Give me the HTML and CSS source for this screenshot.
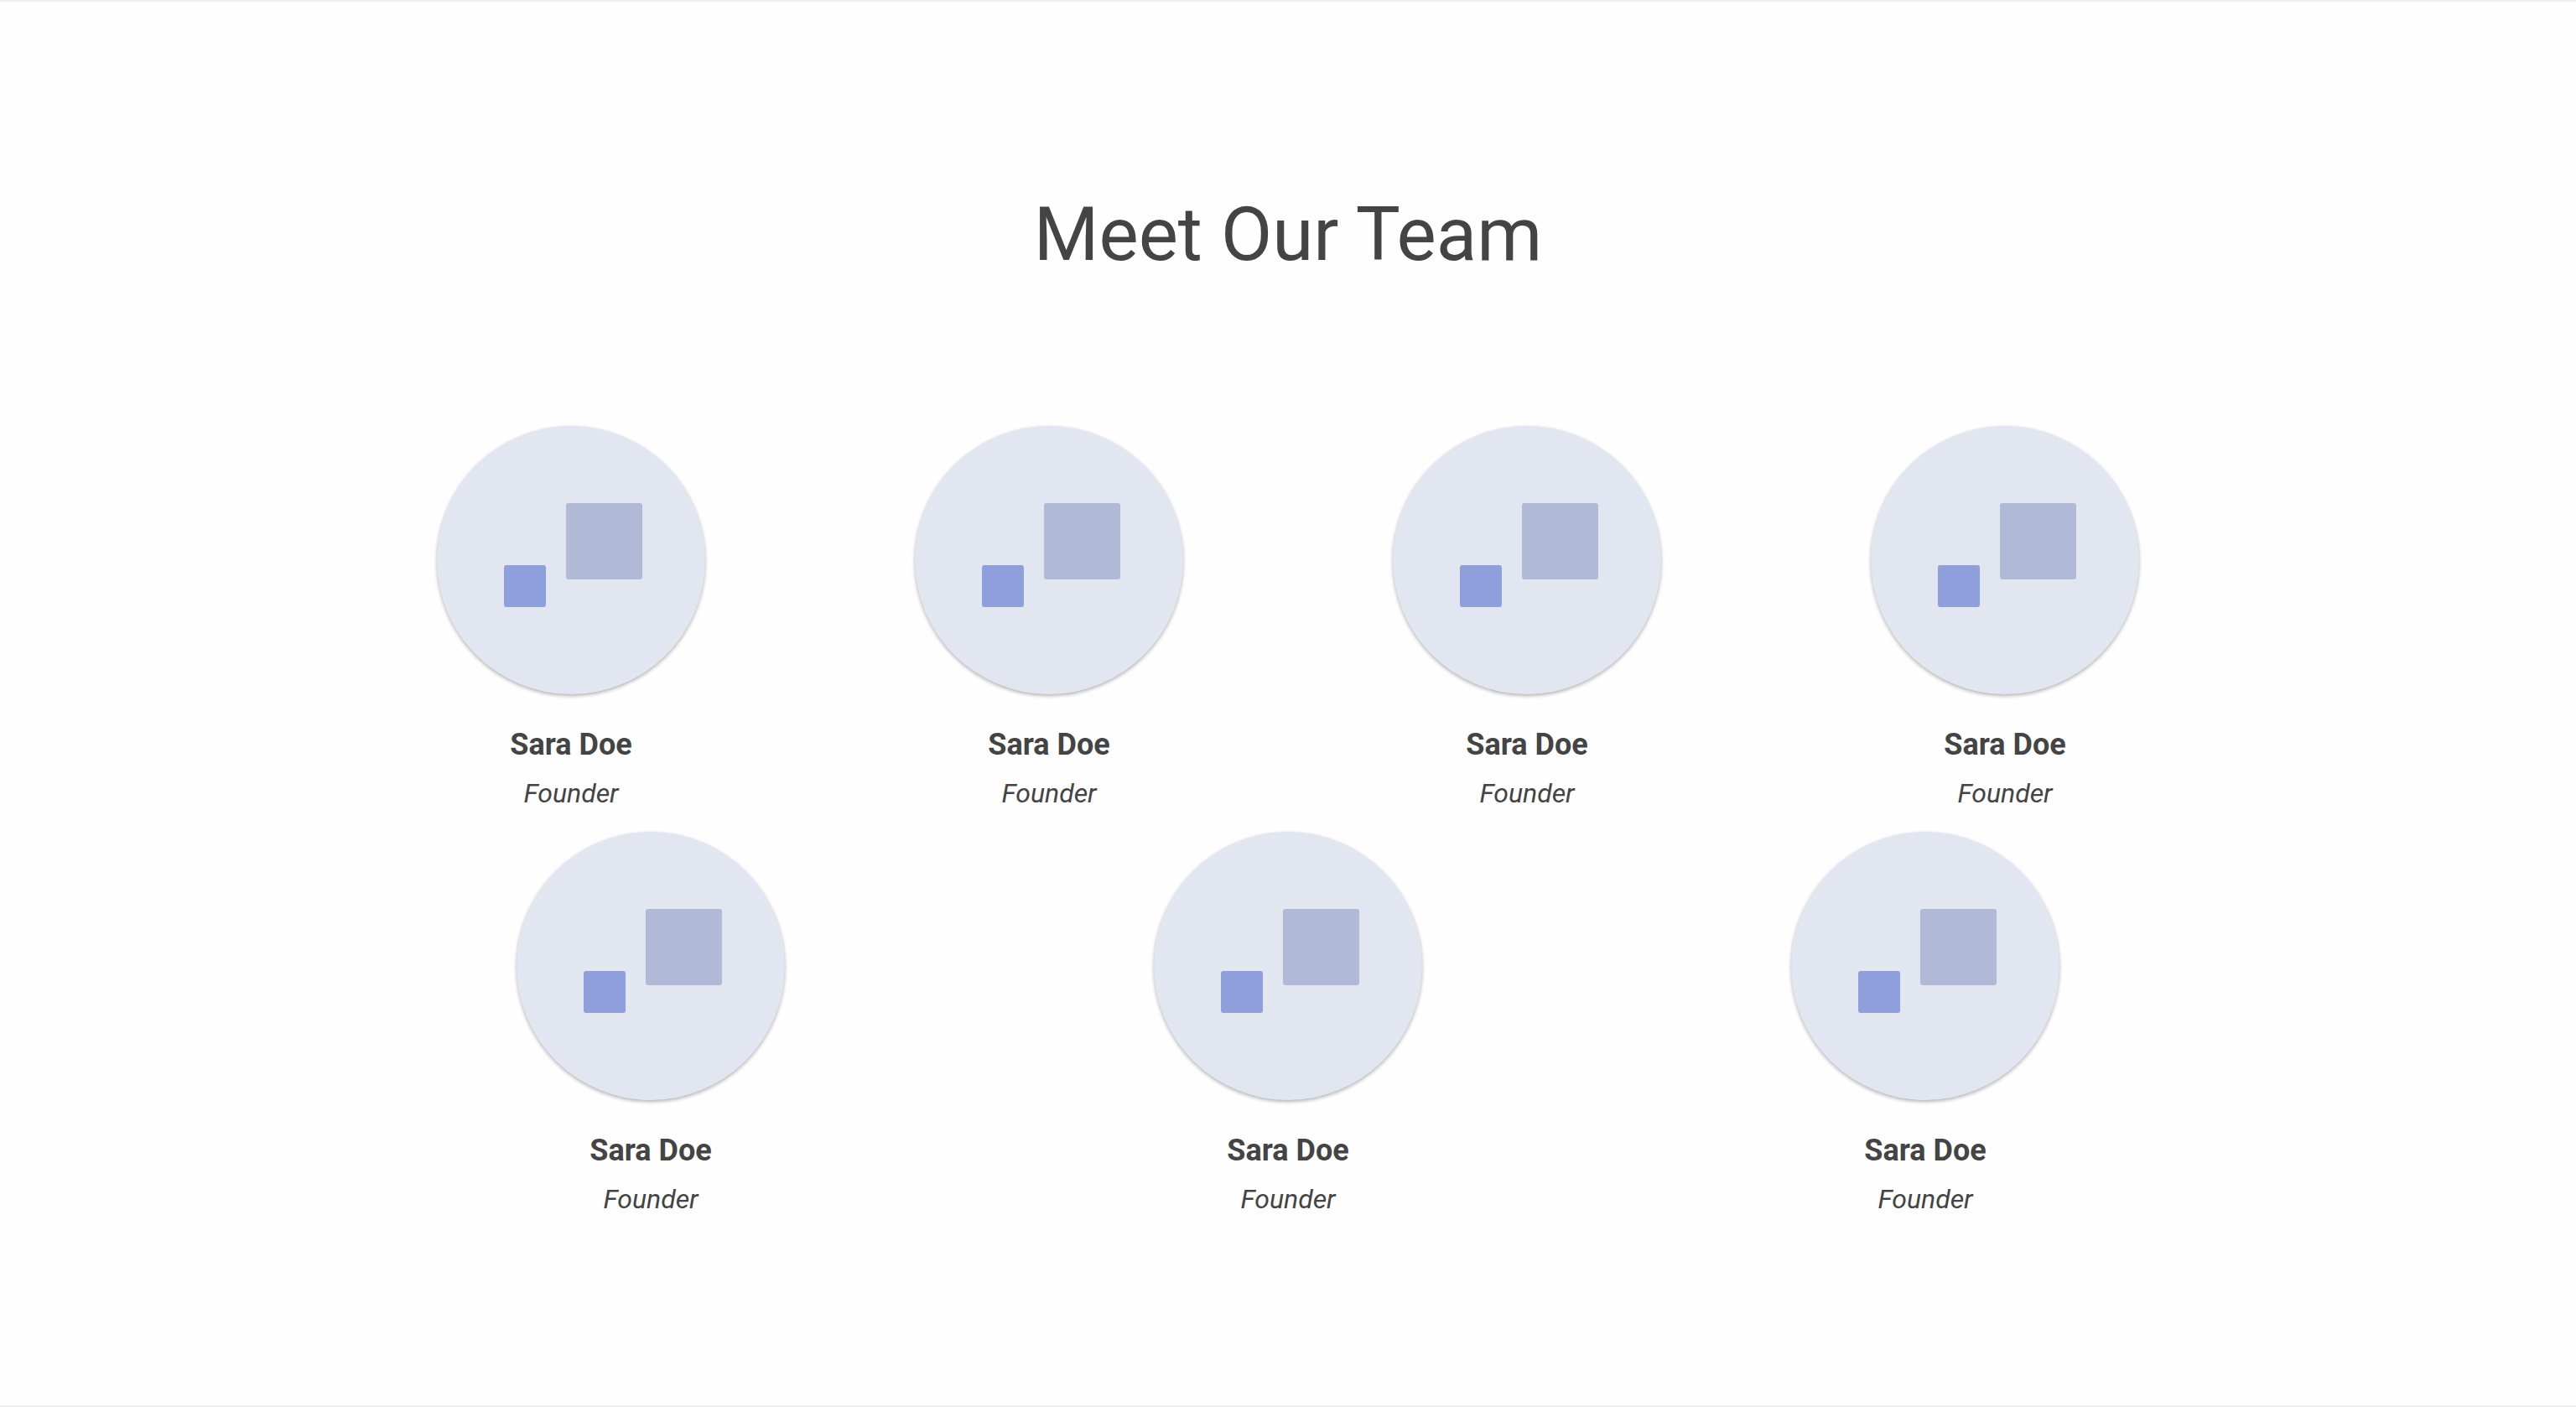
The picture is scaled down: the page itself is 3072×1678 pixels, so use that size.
FILE: index.html
```
<!DOCTYPE html>
<html lang="en">
<head>
<meta charset="utf-8">
<title>Meet Our Team</title>
<link rel="stylesheet" href="styles.css">
</head>
<body>
<svg width="0" height="0" class="defs" aria-hidden="true">
<symbol id="avatar" viewBox="0 0 320 320">
<rect x="154" y="92" width="91" height="91" rx="3" fill="#b0b9d6"/>
<rect x="80" y="166" width="50" height="50" rx="3" fill="#8f9fdb"/>
</symbol>
</svg>
<main class="team">
<h1 class="title">Meet Our Team</h1>
<ul class="members">
<li class="member"><svg class="avatar" aria-hidden="true"><use href="#avatar"/></svg><h2 class="name">Sara Doe</h2><p class="role">Founder</p></li>
<li class="member"><svg class="avatar" aria-hidden="true"><use href="#avatar"/></svg><h2 class="name">Sara Doe</h2><p class="role">Founder</p></li>
<li class="member"><svg class="avatar" aria-hidden="true"><use href="#avatar"/></svg><h2 class="name">Sara Doe</h2><p class="role">Founder</p></li>
<li class="member"><svg class="avatar" aria-hidden="true"><use href="#avatar"/></svg><h2 class="name">Sara Doe</h2><p class="role">Founder</p></li>
</ul>
<ul class="members">
<li class="member"><svg class="avatar" aria-hidden="true"><use href="#avatar"/></svg><h2 class="name">Sara Doe</h2><p class="role">Founder</p></li>
<li class="member"><svg class="avatar" aria-hidden="true"><use href="#avatar"/></svg><h2 class="name">Sara Doe</h2><p class="role">Founder</p></li>
<li class="member"><svg class="avatar" aria-hidden="true"><use href="#avatar"/></svg><h2 class="name">Sara Doe</h2><p class="role">Founder</p></li>
</ul>
</main>
</body>
</html>
```
FILE: styles.css
```
* {
  box-sizing: border-box;
  margin: 0;
  padding: 0;
}

body {
  background: #fefefe;
  color: #444;
  font-family: Roboto, sans-serif;
}

.defs {
  display: block;
}

.team {
  padding: 224px 32px 200px;
  border-top: 2px solid #eee;
  border-bottom: 2px solid #eee;
}

.title {
  margin-bottom: 174px;
  font-size: 89px;
  font-weight: 400;
  line-height: 108px;
  text-align: center;
}

.members {
  display: flex;
  max-width: 2280px;
  margin: 0 auto;
  list-style: none;
}

.member {
  display: flex;
  flex: 1;
  flex-direction: column;
  align-items: center;
  padding-bottom: 16px;
}

.avatar {
  width: 320px;
  height: 320px;
  margin-bottom: 32px;
  border-radius: 50%;
  background: #e1e6f0;
  box-shadow: 0 2px 4px rgba(0, 0, 0, 0.3);
}

.name {
  font-size: 36px;
  font-weight: 700;
  line-height: 56px;
}

.role {
  font-size: 32px;
  font-style: italic;
  line-height: 60px;
}
```
